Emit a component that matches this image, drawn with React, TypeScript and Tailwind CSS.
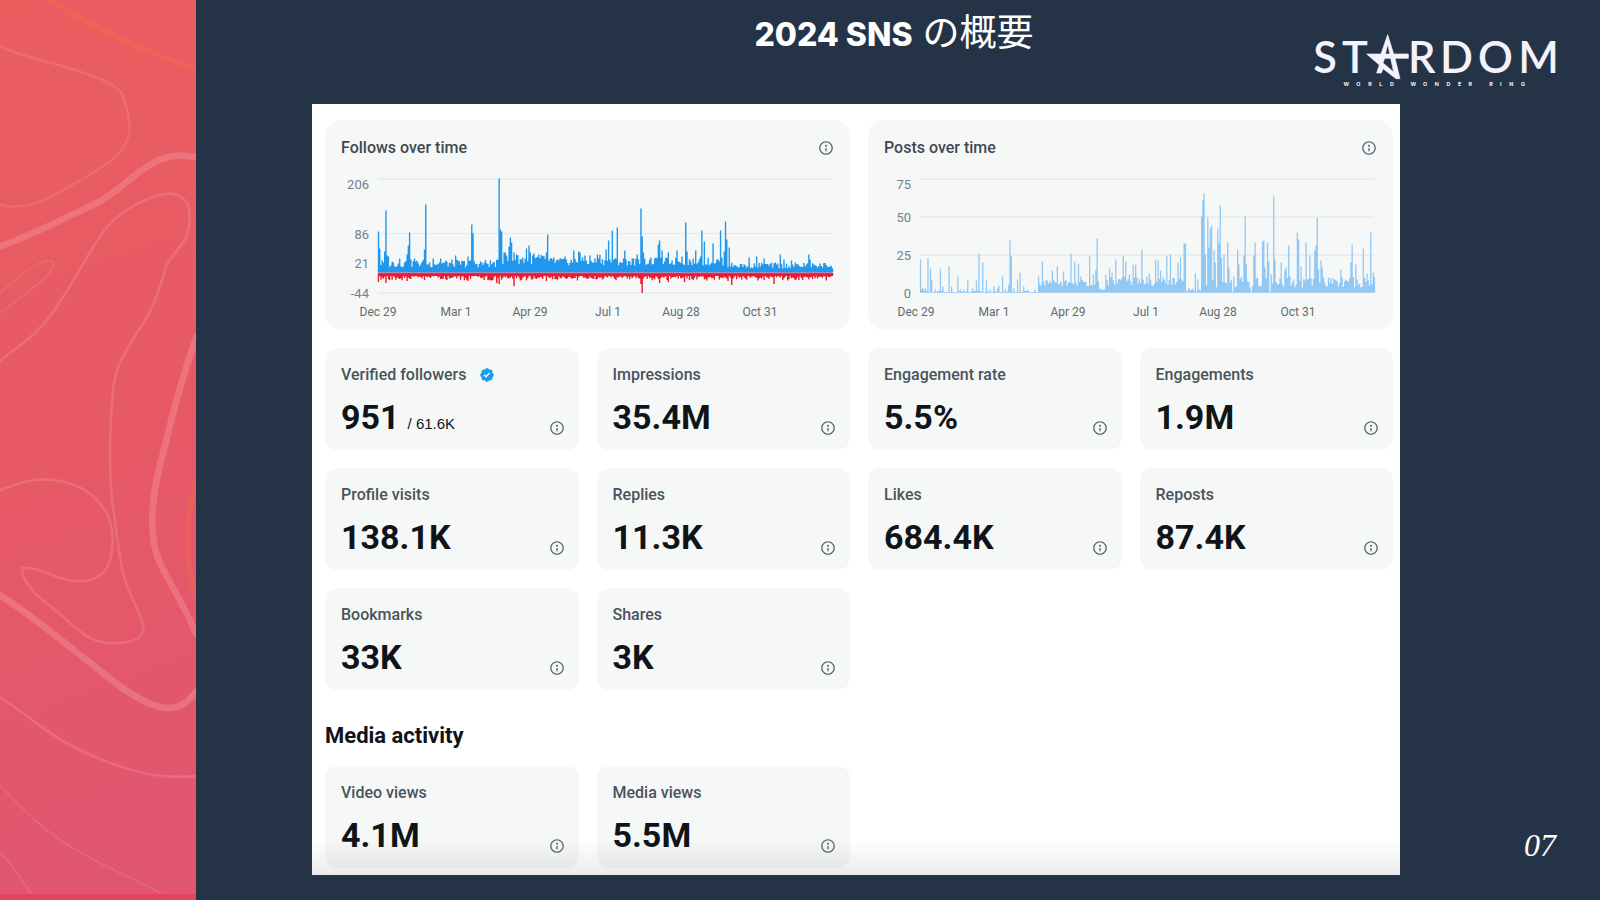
import type { ReactNode } from "react";

type Peak = [x: number, height: number];

const PLOT_WIDTH = 454;
const DAYS = 366;

/** Repeatable noise in the range 0..1 for a day index. */
function noise(day: number, seed: number): number {
  const v = Math.sin(day * 12.9898 + seed * 78.233) * 43758.5453;
  return v - Math.floor(v);
}

function buildSeries(base: (x: number, n: number) => number, seed: number, peaks: Peak[]): Peak[] {
  const step = PLOT_WIDTH / (DAYS - 1);
  const series: Peak[] = [];
  for (let day = 0; day < DAYS; day++) {
    const x = day * step;
    series.push([x, base(x, noise(day, seed))]);
  }
  for (const [x, height] of peaks) {
    const day = Math.min(DAYS - 1, Math.round(x / step));
    series[day] = [day * step, Math.max(height, series[day][1] * 0.5)];
  }
  return series;
}

function barsPath(series: Peak[], left: number, zero: number, direction: 1 | -1): string {
  return series
    .filter(([, h]) => h > 0)
    .map(([x, h]) => `M${(left + x).toFixed(2)} ${zero}v${(-direction * h).toFixed(1)}`)
    .join("");
}

const FOLLOW_PEAKS: Peak[] = [
  [0, 41], [1.3, 24], [6.3, 21], [7.7, 62], [9.3, 17], [10.5, 16], [21, 14], [29, 18], [30, 27], [31.3, 40], [36, 14],
  [46.5, 23], [47.7, 68], [55, 14], [62.7, 14], [77.7, 17], [89.3, 16], [93.7, 48], [95, 39], [121, 94], [122.3, 43],
  [123.5, 41], [125.7, 20], [127, 20], [130, 26], [131.3, 35], [132.5, 30], [135.3, 20], [137.7, 18], [147.7, 24],
  [150.7, 27], [152, 20], [155.7, 19], [160, 18], [167.3, 20], [168.7, 38], [176, 15], [186, 16], [194.7, 22],
  [199.7, 21], [202, 20], [207, 17], [212, 17], [219.3, 18], [222, 18], [227, 23], [230.7, 32], [234.3, 42],
  [238.3, 45], [245.7, 22], [258.3, 18], [263, 64], [264.3, 36], [265.5, 20], [276, 14], [280.3, 28], [281.7, 32],
  [283, 22], [289.3, 20], [298, 22], [303, 16], [306.7, 50], [308, 21], [316.7, 22], [322, 16], [324, 42],
  [325.3, 31], [334, 29], [341.7, 42], [345.3, 21], [346.7, 51], [348, 33], [350.3, 25], [371, 15], [377.7, 16],
  [385, 14], [401.3, 18], [406, 13], [413, 12], [430, 18], [431.3, 13],
];

const UNFOLLOW_PEAKS: Peak[] = [
  [0, 9], [7.7, 10], [29, 8], [90, 8], [118, 10], [121, 11], [136, 13], [168, 8], [262.7, 11], [264.3, 20],
  [281, 10], [290, 9], [306, 9], [352.7, 12], [350, 8], [396, 11], [421, 7],
];

const POST_PEAKS: Peak[] = [
  [0.3, 33], [1.5, 3], [3, 5], [5, 4], [8, 34], [10, 24], [11.3, 13], [14.5, 3], [20.3, 24], [23, 6], [28, 22],
  [29.2, 26], [30.5, 6], [36.7, 16], [39.5, 3], [43, 3], [46.7, 12], [52, 4], [55.5, 12], [59, 39], [62.7, 30],
  [66.5, 12], [70, 3], [73, 6], [77, 4], [78.3, 7], [81.5, 16], [84, 3], [88, 8], [89.2, 52], [90.4, 36], [93, 4],
  [97.5, 13], [99, 20], [103, 6], [107, 3], [115, 3], [118.7, 16], [121.5, 31], [131.5, 22], [136.5, 26],
  [142.5, 21], [150, 39], [153.7, 31], [157.7, 29], [161, 16], [169, 36], [172.5, 18], [175, 22], [176.5, 54],
  [185.7, 18], [188.7, 24], [192, 20], [195, 33], [202.5, 37], [205.5, 31], [209.5, 18], [213, 28], [215, 28],
  [221, 43], [228.5, 19], [235, 33], [238, 32], [240, 22], [246, 37], [249.7, 38], [257.5, 30], [259.5, 35],
  [264, 49], [265.2, 49], [269, 5], [272.5, 4], [275, 19], [277, 13], [281, 76], [282.3, 92], [283.5, 99],
  [284.7, 38], [287, 75], [288.5, 45], [289.7, 64], [291, 67], [293.5, 42], [294.7, 30], [297, 64], [298.5, 49],
  [299.7, 87], [301, 35], [303.5, 38], [307, 50], [308.3, 25], [313.5, 16], [317, 43], [318.5, 28], [320.5, 16],
  [323.5, 37], [324.7, 76], [326, 28], [329, 5], [333.5, 37], [334.8, 50], [342.2, 51], [343.5, 52], [344.7, 25],
  [347, 50], [348.5, 31], [350.7, 18], [353.3, 97], [354.5, 33], [361, 30], [364.5, 22], [366, 25], [368, 47],
  [370, 16], [377, 60], [378.2, 53], [380.7, 26], [385.7, 50], [389, 37], [392.5, 14], [394.5, 42], [395.7, 47],
  [397, 75], [398.2, 23], [400.7, 32], [402, 25], [413, 14], [420.5, 23], [429.8, 30], [431, 48], [435.5, 28],
  [443, 44], [446, 19], [450.3, 60], [453, 20],
];

const follows = buildSeries(
  (x, n) => {
    if (x < 120) return 5 + n * 8;
    if (x < 170) return 8 + n * 10;
    if (x < 345) return 7 + n * 8;
    return 4 + n * 6;
  },
  3,
  FOLLOW_PEAKS,
);

const unfollows = buildSeries((_, n) => 3 + n * n * 4.5, 7, UNFOLLOW_PEAKS);

const posts = buildSeries(
  (x, n) => {
    if (x < 118) return n > 0.72 ? 1.5 : 0;
    if (x < 178) return 6 + n * 7;
    if (x < 185) return n * 4;
    if (x < 266) return 6 + n * 10;
    if (x < 280) return n * 3;
    if (x < 400) return n < 0.12 ? 0 : 3 + n * 12;
    return 5 + n * 11;
  },
  11,
  POST_PEAKS,
);

const X_LABELS = ["Dec 29", "Mar 1", "Apr 29", "Jul 1", "Aug 28", "Oct 31"];

interface ChartProps {
  label: string;
  left: number;
  gridLines: number[];
  yLabels: { text: string; y: number }[];
  xPositions: number[];
  children: ReactNode;
}

function Chart({ label, left, gridLines, yLabels, xPositions, children }: ChartProps) {
  return (
    <svg viewBox="0 0 525 160" className="block h-auto w-full" role="img" aria-label={label}>
      {gridLines.map((y) => (
        <path key={y} d={`M${left} ${y}h${PLOT_WIDTH}`} stroke="#e6ebef" strokeWidth="1.3" />
      ))}
      {children}
      <g fill="#73808c" fontSize="13" textAnchor="end">
        {yLabels.map(({ text, y }) => (
          <text key={text} x={left - 9} y={y}>
            {text}
          </text>
        ))}
      </g>
      <g fill="#65696d" fontSize="12" textAnchor="middle">
        {X_LABELS.map((text, i) => (
          <text key={text} x={xPositions[i]} y="146">
            {text}
          </text>
        ))}
      </g>
    </svg>
  );
}

function InfoButton({ subject }: { subject: string }) {
  return (
    <button type="button" aria-label={`About ${subject}`} className="block size-4 shrink-0 text-[#5b6872]">
      <svg viewBox="0 0 24 24" className="size-4" fill="currentColor" aria-hidden="true">
        <path d="M13.5 8.5c0 .83-.67 1.5-1.5 1.5s-1.5-.67-1.5-1.5S11.17 7 12 7s1.5.67 1.5 1.5zM13 17v-5h-2v5h2zm-1 5.25c5.66 0 10.25-4.59 10.25-10.25S17.66 1.75 12 1.75 1.75 6.34 1.75 12 6.34 22.25 12 22.25zM20.25 12c0 4.56-3.69 8.25-8.25 8.25S3.75 16.56 3.75 12 7.44 3.75 12 3.75s8.25 3.69 8.25 8.25z" />
      </svg>
    </button>
  );
}

function VerifiedBadge() {
  return (
    <svg viewBox="0 0 22 22" className="size-4" fill="#1d9bf0" role="img" aria-label="Verified">
      <path d="M6 7h9v8H6z" fill="#fff" />
      <path d="M20.396 11c-.018-.646-.215-1.275-.57-1.816-.354-.54-.852-.972-1.438-1.246.223-.607.27-1.264.14-1.897-.131-.634-.437-1.218-.882-1.687-.47-.445-1.053-.75-1.687-.882-.633-.13-1.29-.083-1.897.14-.273-.587-.704-1.086-1.245-1.44S11.647 1.62 11 1.604c-.646.017-1.273.213-1.813.568s-.969.854-1.24 1.44c-.608-.223-1.267-.272-1.902-.14-.635.13-1.22.436-1.69.882-.445.47-.749 1.055-.878 1.688-.13.633-.08 1.29.144 1.896-.587.274-1.087.705-1.443 1.245-.356.54-.555 1.17-.574 1.817.02.647.218 1.276.574 1.817.356.54.856.972 1.443 1.245-.224.606-.274 1.263-.144 1.896.13.634.433 1.218.877 1.688.47.443 1.054.747 1.687.878.633.132 1.29.084 1.897-.136.274.586.705 1.084 1.246 1.439.54.354 1.17.551 1.816.569.647-.016 1.276-.213 1.817-.567s.972-.854 1.245-1.44c.604.239 1.266.296 1.903.164.636-.132 1.22-.447 1.68-.907.46-.46.776-1.044.908-1.681s.075-1.299-.165-1.903c.586-.274 1.084-.705 1.439-1.246.354-.54.551-1.17.569-1.816zM9.662 14.85l-3.429-3.428 1.293-1.302 2.072 2.072 4.4-4.794 1.347 1.246z" />
    </svg>
  );
}

function ChartCard({ title, children }: { title: string; children: ReactNode }) {
  return (
    <section className="col-span-2 overflow-hidden rounded-2xl bg-[#f6f8f8]">
      <header className="flex h-[50px] items-center justify-between px-4 pt-1.5">
        <h2 className="text-base font-medium text-[#3f4850]">{title}</h2>
        <InfoButton subject={title} />
      </header>
      {children}
    </section>
  );
}

interface Metric {
  label: string;
  value: string;
  total?: string;
  verified?: boolean;
}

function MetricCard({ label, value, total, verified }: Metric) {
  return (
    <article className="flex h-[102px] items-end justify-between rounded-xl bg-[#f6f8f8] pr-3.5 pb-3.5 pl-4">
      <div className="flex flex-col gap-[11px]">
        <h3 className="flex items-center gap-3 text-base font-medium text-[#4a535b]">
          {label}
          {verified && <VerifiedBadge />}
        </h3>
        <p className="flex items-baseline gap-2 text-[34px] leading-[38px] font-bold text-[#0f1419]">
          {value}
          {total && (
            <span className="font-['Liberation_Sans',sans-serif] text-[15px] leading-5 font-normal">/ {total}</span>
          )}
        </p>
      </div>
      <InfoButton subject={label} />
    </article>
  );
}

const METRICS: Metric[] = [
  { label: "Verified followers", value: "951", total: "61.6K", verified: true },
  { label: "Impressions", value: "35.4M" },
  { label: "Engagement rate", value: "5.5%" },
  { label: "Engagements", value: "1.9M" },
  { label: "Profile visits", value: "138.1K" },
  { label: "Replies", value: "11.3K" },
  { label: "Likes", value: "684.4K" },
  { label: "Reposts", value: "87.4K" },
  { label: "Bookmarks", value: "33K" },
  { label: "Shares", value: "3K" },
];

const MEDIA_METRICS: Metric[] = [
  { label: "Video views", value: "4.1M" },
  { label: "Media views", value: "5.5M" },
];

function StardomLogo() {
  return (
    <svg viewBox="66 22 756 189" className="h-[63px] w-[252px]" fill="#f4f2fc" role="img" aria-label="Stardom World Wonder Ring">
      <g fontFamily="Lato, sans-serif" fontSize="130" fontWeight="600">
        <text x="70 156" y="160">ST</text>
        <text x="354 450 564 685" y="160">RDOM</text>
      </g>
      <path
        d="M293 45 311 103H355V116H315L330 177H318L279 147 274 160H260L268 136 230 103H273ZM293 74 286 103H300ZM284 116 279 130 311 157 302 116Z"
        fillRule="evenodd"
        stroke="#f4f2fc"
        strokeWidth="2"
      />
      <text
        x="169 205 240 272 306 338 370 405 440 475 509 541 572 603 632 664 699"
        y="199"
        fontFamily="Inter, sans-serif"
        fontSize="16"
        fontWeight="700"
        textAnchor="middle"
      >
        WORLD WONDER RING
      </text>
    </svg>
  );
}

function Contours() {
  return (
    <svg viewBox="0 0 588 2682" preserveAspectRatio="none" className="block h-full w-full" fill="none" aria-hidden="true">
      <g stroke="#f26550" strokeOpacity="0.7">
        <path d="M140 -8C270 80 420 150 590 208" strokeWidth="15" />
        <path d="M592 1452C550 1530 556 1710 592 1800" strokeWidth="18" strokeOpacity="0.45" />
      </g>
      <g stroke="#f5a3a9" strokeOpacity="0.28" strokeWidth="8">
        <path d="M-4 138C50 165 110 175 165 192C290 228 370 255 372 300C395 370 398 405 365 450C330 495 260 530 210 558C140 600 80 635 -4 614" strokeOpacity="0.22" />
        <path d="M-4 1086C60 1035 110 1005 160 935C225 845 260 760 320 682C370 620 490 565 535 586C575 605 575 650 562 700C550 745 510 760 495 810C475 880 460 920 430 970C385 1040 345 1090 338 1180C328 1290 325 1440 342 1540C355 1640 360 1710 390 1780C415 1835 430 1860 430 1890C425 1905 428 1925 340 1930C250 1930 210 1860 140 1810C100 1780 65 1740 66 1704C130 1700 150 1735 220 1743C300 1750 338 1710 338 1620C338 1510 250 1440 130 1438C80 1438 40 1455 -4 1472" />
        <path d="M-4 2090C90 2150 160 2215 250 2255C370 2310 470 2340 592 2328" />
        <path d="M-4 2352C80 2440 140 2500 230 2550C310 2600 400 2635 486 2682" strokeWidth="5" strokeOpacity="0.22" />
        <path d="M-4 2554Q55 2615 92 2682" strokeWidth="5" strokeOpacity="0.22" />
        <path d="M-4 882C60 830 110 780 150 782C180 790 145 825 110 855C70 885 35 915 -4 942" strokeWidth="5" strokeOpacity="0.2" />
      </g>
      <g stroke="#f5a3a9" strokeOpacity="0.34" strokeWidth="20">
        <path d="M-6 741C90 710 190 655 290 610C370 565 420 500 490 475C530 462 560 468 592 472" />
        <path d="M592 1004C550 1120 520 1230 492 1350C465 1440 435 1590 480 1690C510 1750 555 1820 592 1910" />
        <path d="M-6 1782C90 1840 180 1920 260 1980C340 2045 430 2120 500 2124C545 2126 570 2100 592 2070" />
      </g>
    </svg>
  );
}

export default function App() {
  return (
    <div className="flex min-h-screen bg-[#253347] font-[Roboto,sans-serif]">
      <aside className="flex w-[196px] shrink-0 flex-col border-b-[6px] border-[#e0455b] bg-linear-160 from-[#ea5e60] via-[#e75965] to-[#e05672]">
        <div className="h-0 min-h-full flex-1 overflow-hidden">
          <Contours />
        </div>
      </aside>

      <main className="flex min-w-0 flex-1 flex-col pb-[25px]">
        <header className="grid h-[104px] shrink-0 grid-cols-[1fr_auto_1fr] items-start pr-9 pl-7">
          <h1 className="col-start-2 flex items-baseline gap-2.5 pt-1 font-[Inter,'Noto_Sans_CJK_JP',sans-serif] text-[32px] leading-[52px] font-extrabold text-white">
            2024 SNS
            <span className="font-['Noto_Sans_CJK_JP',sans-serif] text-[37px] font-normal">の概要</span>
          </h1>
          <div className="justify-self-end pt-[27px]">
            <StardomLogo />
          </div>
        </header>

        <div className="flex flex-1">
          <div className="relative ml-[116px] flex-1 bg-white pt-4 pr-[7px] pb-[7px] pl-[13px]">
            <div className="grid grid-cols-4 gap-[18px]">
              <ChartCard title="Follows over time">
                <Chart
                  label="Follows over time"
                  left={53}
                  gridLines={[9, 63.5, 123]}
                  yLabels={[
                    { text: "206", y: 19 },
                    { text: "86", y: 69 },
                    { text: "21", y: 98 },
                    { text: "-44", y: 128 },
                  ]}
                  xPositions={[53, 131, 205, 283, 356, 435]}
                >
                  <path d={barsPath(follows, 53.5, 102.5, 1)} stroke="#1f97ee" strokeWidth="1.4" />
                  <path d={barsPath(unfollows, 53.5, 103, -1)} stroke="#ea1b2e" strokeWidth="1.4" />
                  <path d={`M53 103h${PLOT_WIDTH}`} stroke="#b0589a" strokeWidth="1.2" />
                </Chart>
              </ChartCard>
              <ChartCard title="Posts over time">
                <Chart
                  label="Posts over time"
                  left={52}
                  gridLines={[9, 47, 85]}
                  yLabels={[
                    { text: "75", y: 19 },
                    { text: "50", y: 52 },
                    { text: "25", y: 90 },
                    { text: "0", y: 128 },
                  ]}
                  xPositions={[48, 126, 200, 278, 350, 430]}
                >
                  <path d={barsPath(posts, 52.5, 122.5, 1)} stroke="#92c8f4" strokeWidth="1.3" />
                  <path d={`M52 122.5h${PLOT_WIDTH + 1}`} stroke="#a9d1f3" strokeWidth="1.2" />
                </Chart>
              </ChartCard>
              {METRICS.map((metric) => (
                <MetricCard key={metric.label} {...metric} />
              ))}
            </div>

            <h2 className="pt-8 pb-4 text-[22px] leading-7 font-bold text-[#0f1419]">Media activity</h2>
            <div className="grid grid-cols-4 gap-[18px]">
              {MEDIA_METRICS.map((metric) => (
                <MetricCard key={metric.label} {...metric} />
              ))}
            </div>
            <div className="pointer-events-none absolute inset-x-0 bottom-0 h-9 bg-linear-to-b from-transparent to-black/8" />
          </div>

          <footer className="flex w-[200px] shrink-0 items-end justify-end pr-[44px] pb-2.5">
            <p className="font-['Liberation_Serif',serif] text-[32px] leading-10 text-white italic">07</p>
          </footer>
        </div>
      </main>
    </div>
  );
}
